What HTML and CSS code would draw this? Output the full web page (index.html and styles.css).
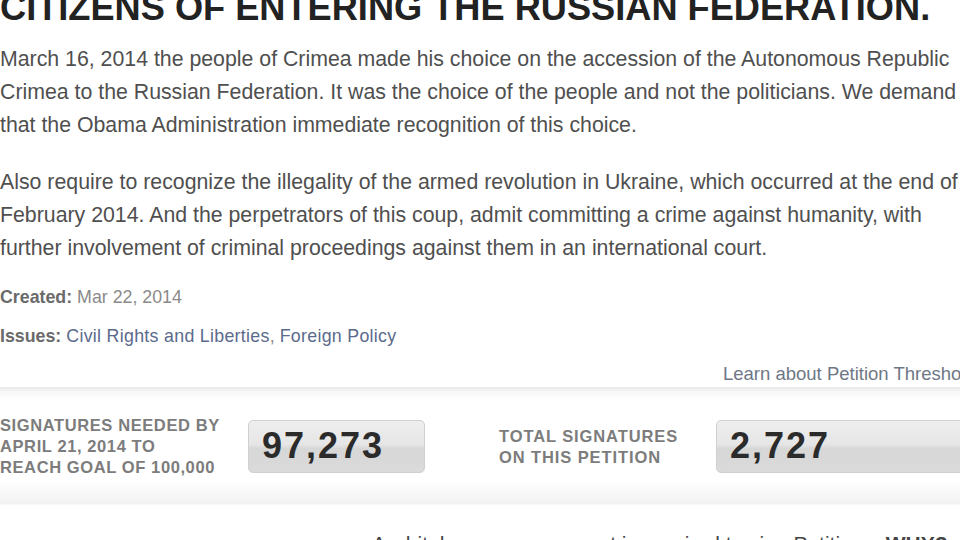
FILE: index.html
```html
<!DOCTYPE html>
<html>
<head>
<meta charset="utf-8">
<link rel="stylesheet" href="styles.css">
</head>
<body>
<div class="page">
  <h1 class="title">CITIZENS OF ENTERING THE RUSSIAN FEDERATION.</h1>
  <div class="body-text">
    <p>March 16, 2014 the people of Crimea made his choice on the accession of the Autonomous Republic Crimea to the Russian Federation. It was the choice of the people and not the politicians. We demand that the Obama Administration immediate recognition of this choice.</p>
    <p>Also require to recognize the illegality of the armed revolution in Ukraine, which occurred at the end of February 2014. And the perpetrators of this coup, admit committing a crime against humanity, with further involvement of criminal proceedings against them in an international court.</p>
  </div>
  <div class="meta">
    <div class="meta-row"><span class="meta-label">Created:</span> <span class="meta-value">Mar 22, 2014</span></div>
    <div class="meta-row"><span class="meta-label">Issues:</span> <a class="issue-link" href="#">Civil Rights and Liberties</a><span class="meta-value">,</span> <a class="issue-link" href="#">Foreign Policy</a></div>
  </div>
  <div class="learn"><a class="learn-link" href="#">Learn about Petition Thresholds</a></div>
  <div class="stats">
    <div class="stat">
      <div class="stat-label stat-label-left">SIGNATURES NEEDED BY<br>APRIL 21, 2014 TO<br>REACH GOAL OF 100,000</div>
      <div class="counter counter-small">97,273</div>
    </div>
    <div class="stat stat-right">
      <div class="stat-label stat-label-right">TOTAL SIGNATURES<br>ON THIS PETITION</div>
      <div class="counter counter-wide">2,727</div>
    </div>
  </div>
  <div class="account">A whitehouse.gov account is required to sign Petitions. <strong>WHY?</strong></div>
</div>
</body>
</html>
```

FILE: styles.css
```css
html, body {
  margin: 0;
  padding: 0;
  background: #ffffff;
  overflow: hidden;
}
body {
  width: 960px;
  height: 540px;
  font-family: "Liberation Sans", Arial, sans-serif;
}
.page {
  width: 1000px;
  margin-top: -12px;
}
.title {
  margin: 0;
  font-size: 36.2px;
  line-height: 40px;
  font-weight: bold;
  color: #222;
  white-space: nowrap;
}
.body-text {
  width: 975px;
  margin-top: 15px;
}
.body-text p {
  margin: 0 0 24px 0;
  font-size: 21.3px;
  line-height: 33px;
  color: #4f4f4f;
}
.body-text p:last-child {
  margin-bottom: 0;
}
.meta {
  margin-top: 22px;
}
.meta-row {
  font-size: 17.8px;
  line-height: 20px;
  margin-bottom: 19px;
}
.meta-row:last-child {
  margin-bottom: 0;
}
.meta-label {
  font-weight: bold;
  color: #6a6a6a;
}
.meta-value {
  color: #8a8a8a;
}
.issue-link {
  color: #5b6a8c;
  text-decoration: none;
  letter-spacing: 0.3px;
}
.learn {
  width: 960px;
  display: flex;
  padding-left: 723px;
  box-sizing: border-box;
  margin-top: 17px;
  white-space: nowrap;
  font-size: 18.5px;
  line-height: 22px;
}
.learn-link {
  color: #6f7786;
  text-decoration: none;
}
.stats {
  margin-top: 2px;
  height: 118px;
  display: flex;
  align-items: center;
  background: linear-gradient(to bottom, #e9e9e9 0px, #f7f7f7 5px, #ffffff 14px, #ffffff 92px, #f2f2f2 117px, #ffffff 118px);
}
.stat {
  display: flex;
  align-items: center;
}
.stat-right {
  margin-left: 74px;
}
.stat-label {
  font-size: 16.5px;
  line-height: 21px;
  font-weight: bold;
  color: #7c7c7c;
  letter-spacing: 0.6px;
  white-space: nowrap;
}
.stat-label-left {
  width: 248px;
  margin-top: 1px;
}
.stat-label-right {
  width: 217px;
  margin-top: 1px;
  letter-spacing: 0.9px;
}
.counter {
  height: 53px;
  box-sizing: border-box;
  border: 1px solid #d0d0d0;
  border-radius: 5px;
  background: linear-gradient(to bottom, #eeeeee 0%, #e6e6e6 46%, #d7d7d7 54%, #dadada 100%);
  font-size: 36px;
  font-weight: bold;
  color: #2b2b2b;
  letter-spacing: 2px;
  display: flex;
  align-items: center;
  padding-left: 13px;
}
.counter-small {
  width: 177px;
}
.counter-wide {
  width: 300px;
}
.account {
  margin-top: 27px;
  padding-left: 372px;
  font-size: 21px;
  line-height: 24px;
  color: #444;
  white-space: nowrap;
}
```
